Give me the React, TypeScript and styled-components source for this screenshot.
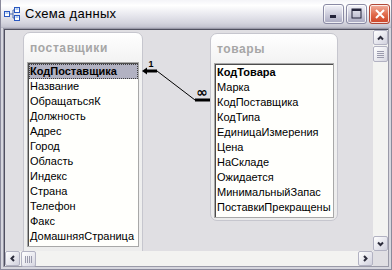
import styled, { createGlobalStyle } from "styled-components";

const GlobalStyle = createGlobalStyle`
  html, body {
    margin: 0;
    padding: 0;
    background: #d8d8e0;
  }
  * {
    box-sizing: border-box;
  }
`;

const Window = styled.div`
  width: 392px;
  height: 270px;
  display: flex;
  flex-direction: column;
  background: #d6d6de;
  border: 1px solid #8a8a9c;
  border-top: none;
  overflow: hidden;
  font-family: "Liberation Sans", Arial, sans-serif;
`;

const TitleBar = styled.div`
  height: 28px;
  flex: none;
  display: flex;
  align-items: center;
  padding: 0 1px 0 3px;
  background: linear-gradient(
    #f4f4f8 0%,
    #ffffff 20%,
    #e8e8ee 55%,
    #d4d4de 85%,
    #c4c4d0 100%
  );
  border-bottom: 1px solid #b8b8c6;
`;

const TitleText = styled.span`
  flex: 1;
  margin-left: 5px;
  font-size: 13px;
  letter-spacing: 0.3px;
  color: #000;
`;

const CaptionButton = styled.div<{ $close?: boolean }>`
  width: 21px;
  height: 20px;
  margin-left: 2px;
  border-radius: 3px;
  border: 1px solid ${(p) => (p.$close ? "#b04838" : "#8a8aa4")};
  box-shadow: inset 0 0 0 1px rgba(255, 255, 255, 0.8);
  background: ${(p) =>
    p.$close
      ? "linear-gradient(#f2b0a0, #e06848 55%, #cc4428)"
      : "linear-gradient(#f4f4fa, #cacada 55%, #a8a8c0)"};
  display: flex;
  align-items: center;
  justify-content: center;
`;

const Body = styled.div`
  flex: 1;
  display: flex;
  padding: 0 2px 2px 2px;
  min-height: 0;
`;

const Client = styled.div`
  flex: 1;
  display: grid;
  grid-template-columns: 1fr 15px;
  grid-template-rows: 1fr 15px;
  border: 1px solid #9a9aa8;
  box-shadow: inset 1px 1px 0 #505060;
  padding: 1px 0 0 1px;
  background: #e0dfe3;
  min-height: 0;
`;

const Canvas = styled.div`
  position: relative;
  overflow: hidden;
  background: #e0dfe3;
`;

const TablePanel = styled.div<{ $x: number; $y: number; $w: number; $h: number }>`
  position: absolute;
  left: ${(p) => p.$x}px;
  top: ${(p) => p.$y}px;
  width: ${(p) => p.$w}px;
  height: ${(p) => p.$h}px;
  display: flex;
  flex-direction: column;
  padding: 0 3px 2px 3px;
  border: 1px solid #c6c6ce;
  border-radius: 7px;
  background: linear-gradient(#ffffff, #f2f2f2 30px, #ececec);
`;

const PanelTitle = styled.div`
  height: 29px;
  flex: none;
  line-height: 31px;
  padding-left: 3px;
  font-size: 12px;
  font-weight: bold;
  letter-spacing: 0.6px;
  color: #a6a6a6;
`;

const FieldList = styled.div`
  background: #fffffc;
  border: 1px solid #a8a8a8;
  box-shadow: inset 1px 1px 0 #4c4c4c;
  padding: 1px 0 2px 1px;
`;

const Field = styled.div<{ $key?: boolean; $selected?: boolean }>`
  height: 15px;
  line-height: 15px;
  padding-left: 1px;
  font-size: 11px;
  white-space: nowrap;
  color: #000;
  font-weight: ${(p) => (p.$key ? "bold" : "normal")};
  background: ${(p) => (p.$selected ? "#b2b2c2" : "transparent")};
  outline: ${(p) => (p.$selected ? "1px dotted #404040" : "none")};
  outline-offset: -1px;
`;

const Links = styled.svg`
  position: absolute;
  left: 0;
  top: 0;
  width: 100%;
  height: 100%;
  pointer-events: none;
`;

const VScroll = styled.div`
  display: flex;
  flex-direction: column;
  background: #f3f3f1;
`;

const HScroll = styled.div`
  display: flex;
  background: #f3f3f1;
`;

const SizeBox = styled.div`
  background: #e0dfe3;
`;

const ScrollButton = styled.div`
  width: 15px;
  height: 15px;
  flex: none;
  border: 1px solid #b2b2c2;
  border-radius: 2px;
  background: linear-gradient(135deg, #ffffff, #e4e4ec 60%, #d2d2de);
  display: flex;
  align-items: center;
  justify-content: center;
`;

const Thumb = styled.div<{ $vertical?: boolean }>`
  width: 15px;
  height: 16px;
  flex: none;
  margin: ${(p) => (p.$vertical ? "1px 0 0 0" : "0 0 0 1px")};
  border: 1px solid #b2b2c2;
  border-radius: 2px;
  background: linear-gradient(135deg, #ffffff, #e8e8ee 60%, #d6d6e0);
  display: flex;
  align-items: center;
  justify-content: center;
`;

const Spacer = styled.div`
  flex: 1;
`;

const Chevron = ({ dir }: { dir: "up" | "down" | "left" | "right" }) => {
  const paths = {
    up: "M2 6.5 L4.5 4 L7 6.5",
    down: "M2 3.5 L4.5 6 L7 3.5",
    left: "M6 2 L3.5 4.5 L6 7",
    right: "M3 2 L5.5 4.5 L3 7",
  };
  return (
    <svg width="9" height="9" viewBox="0 0 9 9">
      <path d={paths[dir]} fill="none" stroke="#2c2c3c" strokeWidth="2" />
    </svg>
  );
};

const Grip = ({ vertical }: { vertical?: boolean }) => (
  <svg width="7" height="7" viewBox="0 0 7 7">
    {[0.5, 2.5, 4.5, 6.5].map((v) =>
      vertical ? (
        <line key={v} x1="0" y1={v} x2="7" y2={v} stroke="#9a9aac" strokeWidth="1" />
      ) : (
        <line key={v} x1={v} y1="0" x2={v} y2="7" stroke="#9a9aac" strokeWidth="1" />
      )
    )}
  </svg>
);

const DiagramIcon = () => (
  <svg width="16" height="14" viewBox="0 0 16 14">
    <path d="M5 7 H9 M9 3 V11 M9 3 H11 M9 11 H11" stroke="#4a6ab0" strokeWidth="1" fill="none" />
    <rect x="0.5" y="4.5" width="5" height="5" fill="#fff" stroke="#2a58c0" />
    <rect x="10.5" y="0.5" width="5" height="5" fill="#fff" stroke="#2a58c0" />
    <rect x="10.5" y="8.5" width="5" height="5" fill="#fff" stroke="#2a58c0" />
    <rect x="1.5" y="5.5" width="3" height="1" fill="#6a9ae0" />
    <rect x="11.5" y="1.5" width="3" height="1" fill="#6a9ae0" />
    <rect x="11.5" y="9.5" width="3" height="1" fill="#6a9ae0" />
  </svg>
);

const MinGlyph = () => (
  <svg width="11" height="11" viewBox="0 0 11 11">
    <rect x="2" y="7" width="6" height="3" fill="#23233a" />
  </svg>
);

const MaxGlyph = () => (
  <svg width="11" height="11" viewBox="0 0 11 11">
    <rect x="1" y="1" width="9" height="9" fill="none" stroke="#23233a" strokeWidth="1" />
    <rect x="1" y="1" width="9" height="2" fill="#23233a" />
  </svg>
);

const CloseGlyph = () => (
  <svg width="12" height="12" viewBox="0 0 12 12">
    <path d="M2 2 L10 10 M10 2 L2 10" stroke="#ffffff" strokeWidth="2" />
  </svg>
);

const SUPPLIERS = [
  "КодПоставщика",
  "Название",
  "ОбращатьсяК",
  "Должность",
  "Адрес",
  "Город",
  "Область",
  "Индекс",
  "Страна",
  "Телефон",
  "Факс",
  "ДомашняяСтраница",
];

const PRODUCTS = [
  "КодТовара",
  "Марка",
  "КодПоставщика",
  "КодТипа",
  "ЕдиницаИзмерения",
  "Цена",
  "НаСкладе",
  "Ожидается",
  "МинимальныйЗапас",
  "ПоставкиПрекращены",
];

export default function App() {
  return (
    <>
      <GlobalStyle />
      <Window>
        <TitleBar>
          <DiagramIcon />
          <TitleText>Схема данных</TitleText>
          <CaptionButton>
            <MinGlyph />
          </CaptionButton>
          <CaptionButton>
            <MaxGlyph />
          </CaptionButton>
          <CaptionButton $close>
            <CloseGlyph />
          </CaptionButton>
        </TitleBar>
        <Body>
          <Client>
            <Canvas>
              <TablePanel $x={18} $y={2} $w={120} $h={260}>
                <PanelTitle>поставщики</PanelTitle>
                <FieldList>
                  {SUPPLIERS.map((f, i) => (
                    <Field key={f} $key={i === 0} $selected={i === 0}>
                      {f}
                    </Field>
                  ))}
                </FieldList>
              </TablePanel>
              <TablePanel $x={205} $y={3} $w={128} $h={188}>
                <PanelTitle>товары</PanelTitle>
                <FieldList>
                  {PRODUCTS.map((f, i) => (
                    <Field key={f} $key={i === 0}>
                      {f}
                    </Field>
                  ))}
                </FieldList>
              </TablePanel>
              <Links>
                <polygon points="137,41 142,37.5 142,44.5" fill="#000" />
                <line x1="141" y1="41" x2="152" y2="41" stroke="#000" strokeWidth="3" />
                <text
                  x="146"
                  y="37"
                  fontSize="9"
                  fontWeight="bold"
                  fontFamily="Liberation Sans, Arial, sans-serif"
                  textAnchor="middle"
                >
                  1
                </text>
                <line x1="152" y1="41" x2="190" y2="70" stroke="#000" strokeWidth="1" />
                <line x1="190" y1="70" x2="205" y2="70" stroke="#000" strokeWidth="3" />
                <text
                  x="197"
                  y="67"
                  fontSize="14"
                  fontWeight="bold"
                  fontFamily="DejaVu Sans, sans-serif"
                  textAnchor="middle"
                >
                  ∞
                </text>
              </Links>
            </Canvas>
            <VScroll>
              <ScrollButton>
                <Chevron dir="up" />
              </ScrollButton>
              <Thumb $vertical>
                <Grip vertical />
              </Thumb>
              <Spacer />
              <ScrollButton>
                <Chevron dir="down" />
              </ScrollButton>
            </VScroll>
            <HScroll>
              <ScrollButton>
                <Chevron dir="left" />
              </ScrollButton>
              <Thumb>
                <Grip />
              </Thumb>
              <Spacer />
              <ScrollButton>
                <Chevron dir="right" />
              </ScrollButton>
            </HScroll>
            <SizeBox />
          </Client>
        </Body>
      </Window>
    </>
  );
}
